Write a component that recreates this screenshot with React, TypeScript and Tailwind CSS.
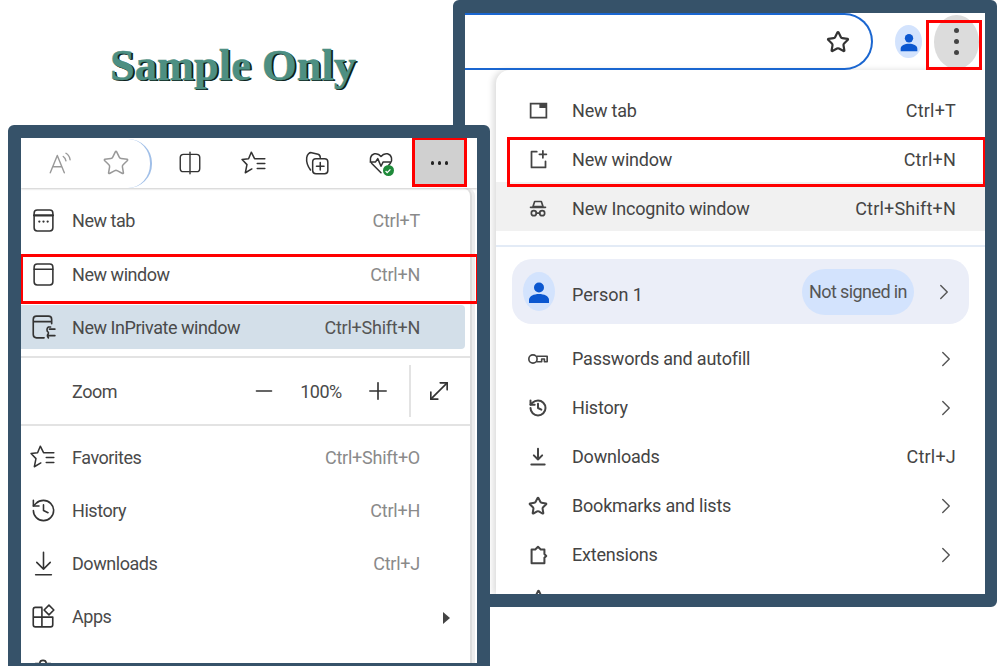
import type { ReactNode } from "react";
import { ChevronRight, History, Minus, MoveDiagonal, Plus, Star } from "lucide-react";

const font = "font-['Roboto',_'Noto_Sans',_sans-serif]";

function Ic({ children, className = "", sw = 1.6 }: { children: ReactNode; className?: string; sw?: number }) {
  return (
    <svg viewBox="0 0 24 24" fill="none" stroke="currentColor" strokeWidth={sw} strokeLinecap="round" strokeLinejoin="round" className={className}>
      {children}
    </svg>
  );
}

const starFav = <path d="M22 8h-9.500L9.500 2 7 8l-6 .8 4.500 4.700L4 21l6-3.500M15 12.500h7M15 17h7" />;

function EdgeRow({ icon, label, shortcut, active }: { icon?: ReactNode; label: string; shortcut?: ReactNode; active?: boolean }) {
  return (
    <div className={`flex h-[44px] items-center ${active ? "mr-[5px] rounded-r-[4px] bg-[#d3dfe9] pr-[45px]" : "pr-[50px]"}`}>
      <div className="flex w-[51px] justify-center pr-[7px] text-[#333]">{icon}</div>
      <span className="tracking-[-0.45px] text-[#4a4a4a]">{label}</span>
      <span className={`ml-auto tracking-[-0.25px] ${active ? "text-[#555]" : "text-[#8a8a8a]"}`}>{shortcut}</span>
    </div>
  );
}

function EdgeWindow() {
  return (
    <div className={`absolute left-[8px] top-[125px] z-10 h-[541px] w-[482px] overflow-hidden rounded-t-[6px] border-x-[13px] border-t-[13px] border-b-[3px] border-[#365269] bg-white ${font} text-[18px]`}>
      <div className="relative flex h-[50px] items-center shadow-[0_1px_2px_#ccc]">
        <div className="flex h-[49px] w-[131px] items-center gap-[29px] rounded-r-[24px] border-r-2 border-[#a0bfe8] pl-[26px] text-[#999]">
          <Ic className="h-[26px] w-[26px]" sw={1.3}>
            <path d="M3 21L9.500 5l6.500 16M5.500 15.500h8M15 6c1.500 1 2.200 2.200 2.500 4M17.500 3c2.500 1.500 3.500 3.600 3.800 6" />
          </Ic>
          <Star className="h-[28px] w-[28px]" strokeWidth={1.3} />
        </div>
        <div className="ml-[25px] flex items-center gap-[37.500px] text-[#333]">
          <Ic className="h-[26px] w-[26px]" sw={1.3}>
            <path d="M11 4H6a3 3 0 0 0-3 3v10a3 3 0 0 0 3 3h5M13 4h5a3 3 0 0 1 3 3v10a3 3 0 0 1-3 3h-5M12 2v20" />
          </Ic>
          <Ic className="h-[26px] w-[26px]" sw={1.4}>{starFav}</Ic>
          <Ic className="h-[26px] w-[26px]" sw={1.4}>
            <rect x="8" y="8" width="14" height="14" rx="3" />
            <path d="M15 11.500v7M11.500 15h7M6 18.500C3.500 15 2 11 2.500 7 3 4 5 2 7 2.500l6 1.500c1.500.5 2 1.500 2 3" />
          </Ic>
          <div className="relative">
            <Ic className="h-[26px] w-[26px]" sw={1.4}>
              <path d="M12 21L3.500 12.500C1 9.500 2 4.500 6 3.500c2.500-.5 4.500.5 6 2.500 1.500-2 3.500-3 6-2.500 4 1 5 6 2.500 9L19 14M2 11h5l2-3 3 7 2-4h7" />
            </Ic>
            <span className="absolute bottom-0 right-0 flex h-[11px] w-[11px] items-center justify-center rounded-full bg-[#1f8a3a]">
              <svg viewBox="0 0 10 10" className="h-[8px] w-[8px]" fill="none" stroke="#fff" strokeWidth="1.6"><path d="M2 5l2 2 4-4" /></svg>
            </span>
          </div>
        </div>
        <div className="ml-auto mr-[12px] flex h-[46px] w-[51px] items-center justify-center gap-[3.500px] bg-[#d0d0d0]">
          <span className="h-[3.500px] w-[3.500px] rounded-full bg-[#222]" />
          <span className="h-[3.500px] w-[3.500px] rounded-full bg-[#222]" />
          <span className="h-[3.500px] w-[3.500px] rounded-full bg-[#222]" />
        </div>
        <div className="absolute right-[10px] top-[-1px] h-[50px] w-[55px] border-[3px] border-[#f00]" />
      </div>

      <div className="mr-[7px] h-[480px] rounded-tr-[8px] bg-white pt-[10px] shadow-[2px_0_0_#ddd,5px_0_0_#ededed]">
        <EdgeRow
          label="New tab"
          shortcut="Ctrl+T"
          icon={
            <Ic className="h-[25px] w-[25px]" sw={1.5}>
              <rect x="3" y="2" width="18" height="20" rx="3" />
              <path d="M3 7h18M8 13h.01M12 13h.01M16 13h.01" strokeWidth={2.200} />
            </Ic>
          }
        />
        <div className="h-[10px]" />
        <div className="relative">
          <EdgeRow
            label="New window"
            shortcut="Ctrl+N"
            icon={
              <Ic className="h-[25px] w-[25px]" sw={1.5}>
                <rect x="3" y="2" width="18" height="20" rx="3" />
                <path d="M3 7h18" />
              </Ic>
            }
          />
          <div className="absolute left-[-1px] right-[-9px] top-[2px] h-[50px] border-[3px] border-[#f00]" />
        </div>
        <div className="h-[9px]" />
        <EdgeRow
          active
          label="New InPrivate window"
          shortcut="Ctrl+Shift+N"
          icon={
            <Ic className="h-[26px] w-[26px]" sw={1.5}>
              <path d="M13 22H6a3 3 0 0 1-3-3V5a3 3 0 0 1 3-3h11a3 3 0 0 1 3 3v4M3 7h17M19 12h-2a3 3 0 0 0 0 5M23 14h-5M17 20h6M17 18a3 3 0 0 0 0 4" />
            </Ic>
          }
        />
        <div className="mt-[7px] h-[2px] bg-[#e3e3e3]" />
        <div className="flex h-[66px] items-center">
          <span className="ml-[51px] tracking-[-0.45px] text-[#4a4a4a]">Zoom</span>
          <Minus className="ml-[134px] h-[26px] w-[26px] text-[#333]" strokeWidth={1.4} />
          <span className="ml-[23px] tracking-[-0.45px] text-[#4a4a4a]">100%</span>
          <Plus className="ml-[22px] h-[28px] w-[28px] text-[#333]" strokeWidth={1.4} />
          <div className="ml-[17px] h-[52px] w-[2px] bg-[#e3e3e3]" />
          <MoveDiagonal className="ml-[14px] h-[28px] w-[28px] text-[#333]" strokeWidth={1.4} />
        </div>
        <div className="h-[2px] bg-[#e3e3e3]" />
        <div className="flex flex-col gap-[9px] pt-[9px]">
          <EdgeRow label="Favorites" shortcut="Ctrl+Shift+O" icon={<Ic className="h-[26px] w-[26px]" sw={1.4}>{starFav}</Ic>} />
          <EdgeRow label="History" shortcut="Ctrl+H" icon={<History className="h-[27px] w-[27px]" strokeWidth={1.4} />} />
          <EdgeRow
            label="Downloads"
            shortcut="Ctrl+J"
            icon={
              <Ic className="h-[27px] w-[27px]" sw={1.4}>
                <path d="M12 2v15M6 11l6 6 6-6M5 22h14" />
              </Ic>
            }
          />
          <EdgeRow
            label="Apps"
            shortcut={<span className="inline-block h-0 w-0 translate-x-[30px] border-y-[6px] border-l-[7px] border-y-transparent border-l-[#444] align-middle" />}
            icon={
              <Ic className="h-[26px] w-[26px]" sw={1.5}>
                <path d="M11 4H5a2 2 0 0 0-2 2v14a2 2 0 0 0 2 2h14a2 2 0 0 0 2-2v-7H3M11 5v17M17.500 2l4.500 4.500-4.500 4.500-4.500-4.500z" />
              </Ic>
            }
          />
          <EdgeRow
            label="Extensions"
            icon={
              <Ic className="h-[26px] w-[26px]" sw={1.5}>
                <path d="M5 7h4a3 3 0 1 1 6 0h4v12H5z" />
              </Ic>
            }
          />
        </div>
      </div>
    </div>
  );
}

function ChromeRow({ icon, label, shortcut, arrow, active }: { icon: ReactNode; label: string; shortcut?: string; arrow?: boolean; active?: boolean }) {
  return (
    <div className={`flex h-[49px] items-center pr-[29px] ${active ? "mt-[-2px] bg-[#f1f1f1] pt-[4px]" : ""}`}>
      <div className="flex w-[76px] justify-center pl-[10px] pr-[2px] text-[#444]">{icon}</div>
      <span className="tracking-[-0.2px] text-[#444]">{label}</span>
      {shortcut && <span className="ml-auto tracking-[0.2px] text-[#444]">{shortcut}</span>}
      {arrow && <ChevronRight className="ml-auto mr-[-3px] h-[26px] w-[26px] text-[#555]" strokeWidth={1.3} />}
    </div>
  );
}

function PersonIcon({ className }: { className: string }) {
  return (
    <svg viewBox="0 0 24 24" fill="#0b57d0" className={className}>
      <circle cx="12" cy="7.500" r="5" />
      <path d="M2 23v-3c0-4 5-6 10-6s10 2 10 6v3z" />
    </svg>
  );
}

function ChromeWindow() {
  return (
    <div className={`absolute left-[453px] top-0 h-[607px] w-[544px] overflow-hidden rounded-[6px] border-x-[12px] border-y-[13px] border-[#365269] bg-white ${font} text-[18px]`}>
      <div className="relative flex h-[57px] items-center">
        <div className="flex h-[57px] w-[408px] items-center justify-end rounded-r-[30px] border-y-2 border-r-2 border-[#1a66d0] pr-[21px] text-[#333]">
          <Star className="h-[24px] w-[24px]" strokeWidth={2.200} />
        </div>
        <div className="ml-[22px] flex h-[33px] w-[27px] items-center justify-center rounded-[50%] bg-[#d3e3fd]">
          <PersonIcon className="h-[20px] w-[20px]" />
        </div>
        <div className="ml-[12px] flex h-[54px] w-[45px] flex-col items-center justify-center gap-[6px] rounded-[50%] bg-[#dcdcdc]">
          <span className="h-[5px] w-[5px] rounded-full bg-[#444]" />
          <span className="h-[5px] w-[5px] rounded-full bg-[#444]" />
          <span className="h-[5px] w-[5px] rounded-full bg-[#444]" />
        </div>
        <div className="absolute right-[3px] top-[7px] h-[50px] w-[56px] border-[3px] border-[#f00]" />
      </div>

      <div className="ml-[31px] h-[524px] rounded-tl-[14px] bg-white pt-[16px] shadow-[-3px_0_6px_#ddd]">
        <ChromeRow
          label="New tab"
          shortcut="Ctrl+T"
          icon={
            <svg viewBox="0 0 24 24" className="h-[21px] w-[21px]" fill="currentColor">
              <path d="M2 3h20v18H2zm2 2v14h16V9h-7V5z" fillRule="evenodd" />
            </svg>
          }
        />
        <div className="relative">
          <ChromeRow
            label="New window"
            shortcut="Ctrl+N"
            icon={
              <Ic className="h-[21px] w-[21px]" sw={2}>
                <path d="M10 3H4v18h16v-7M17 2v8M13 6h8" />
              </Ic>
            }
          />
          <div className="absolute left-[11px] right-[-1px] top-[2px] h-[50px] border-[3px] border-[#f00]" />
        </div>
        <ChromeRow
          active
          label="New Incognito window"
          shortcut="Ctrl+Shift+N"
          icon={
            <Ic className="h-[20px] w-[20px]" sw={2}>
              <path d="M8 3h8l2 6H6zM3 10h18" />
              <circle cx="7" cy="17" r="3" />
              <circle cx="17" cy="17" r="3" />
              <path d="M10 17h4" />
            </Ic>
          }
        />
        <div className="mt-[14px] h-[2px] bg-[#e3ebf6]" />
        <div className="mx-[16px] mt-[12px] flex h-[65px] items-center rounded-[20px] bg-[#ebeef8] pl-[11px] pr-[12px]">
          <div className="flex h-[39px] w-[32px] items-center justify-center rounded-[50%] bg-[#d3e3fd]">
            <PersonIcon className="h-[24px] w-[24px]" />
          </div>
          <span className="ml-[17px] mt-[6px] text-[#444]">Person 1</span>
          <span className="ml-auto flex h-[46px] w-[112px] items-center justify-center rounded-[23px] bg-[#d3e3fd] tracking-[-0.6px] text-[#555]">Not signed in</span>
          <ChevronRight className="ml-[17px] h-[26px] w-[26px] text-[#555]" strokeWidth={1.3} />
        </div>
        <div className="pt-[10px]">
          <ChromeRow
            label="Passwords and autofill"
            arrow
            icon={
              <Ic className="h-[22px] w-[22px]" sw={1.800}>
                <circle cx="6.500" cy="12" r="4.500" />
                <path d="M11 9h11v6h-3v-3h-3v3h-5" />
              </Ic>
            }
          />
          <ChromeRow label="History" arrow icon={<History className="h-[20px] w-[20px]" strokeWidth={2.400} />} />
          <ChromeRow
            label="Downloads"
            shortcut="Ctrl+J"
            icon={
              <Ic className="h-[20px] w-[20px]" sw={2.400}>
                <path d="M12 2v13M7 10l5 5 5-5M4 21h16" />
              </Ic>
            }
          />
          <ChromeRow label="Bookmarks and lists" arrow icon={<Star className="h-[20px] w-[20px]" strokeWidth={2.400} />} />
          <ChromeRow
            label="Extensions"
            arrow
            icon={
              <Ic className="h-[22px] w-[22px]" sw={2.200}>
                <path d="M5 6h4l3-3 3 3h4v5l2 2-2 2v6H5z" />
              </Ic>
            }
          />
          <div className="mt-[-4px]">
            <ChromeRow label="" icon={<Star className="h-[21px] w-[21px]" strokeWidth={2.200} />} />
          </div>
        </div>
      </div>
    </div>
  );
}

export default function App() {
  return (
    <div className="relative h-[666px] w-[999px] overflow-hidden bg-white">
      <h1 className="absolute left-[110px] top-[39px] font-['Liberation_Serif',_serif] text-[44.500px] font-bold leading-[52px] text-[#4d8f82] [-webkit-text-stroke:0.5px_#4d8f82] [text-shadow:1px_1px_0_#0d1f1b,2px_1px_0_#0d1f1b]">
        Sample Only
      </h1>
      <ChromeWindow />
      <EdgeWindow />
    </div>
  );
}
